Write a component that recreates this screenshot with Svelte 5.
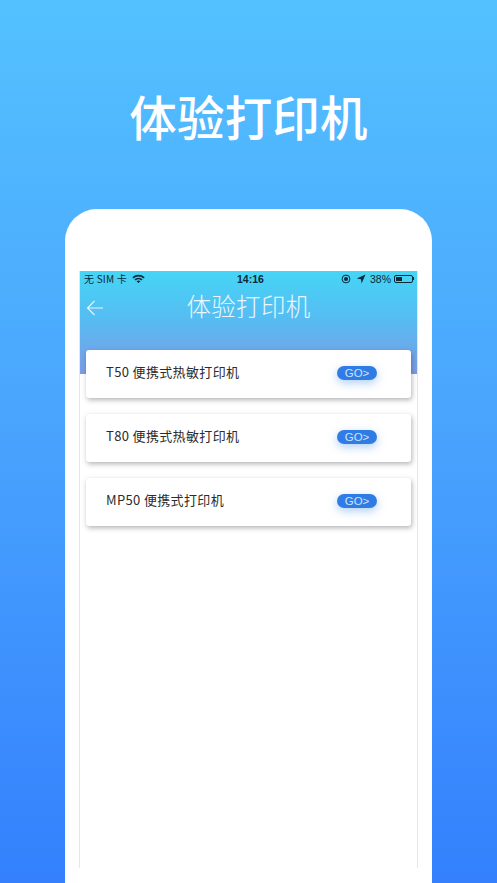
<script>
  const items = ['T50 便携式热敏打印机', 'T80 便携式热敏打印机', 'MP50 便携式打印机'];
</script>

<div class="page">
  <h1 class="headline">体验打印机</h1>
  <div class="phone">
    <div class="screen">
      <div class="hero">
        <div class="status">
          <div class="s-left">
            <span class="carrier">无 SIM 卡</span>
            <svg width="13" height="9" viewBox="0 0 13 9" class="wifi"><path d="M0.3 3.2A9 9 0 0 1 12.7 3.2L11.5 4.5A7.2 7.2 0 0 0 1.5 4.5Z M2.4 5.3A6 6 0 0 1 10.6 5.3L9.4 6.6A4.2 4.2 0 0 0 3.6 6.6Z M4.5 7.3A3 3 0 0 1 8.5 7.3L6.5 9Z" fill="#0c2a3a"/></svg>
          </div>
          <span class="time">14:16</span>
          <div class="s-right">
            <svg width="10" height="10" viewBox="0 0 10 10"><circle cx="5" cy="5" r="3.9" fill="none" stroke="#0c2a3a" stroke-width="1"/><circle cx="5" cy="5" r="2" fill="#0c2a3a"/></svg>
            <svg width="10" height="10" viewBox="0 0 10 10" class="loc"><path d="M9.5 0.5L0.8 4.6L5 5.2L5.6 9.4Z" fill="#0c2a3a"/></svg>
            <span class="pct">38%</span>
            <div class="battery"><div class="level"></div></div>
            <div class="nub"></div>
          </div>
        </div>
        <div class="nav">
          <svg class="back" width="18" height="16" viewBox="0 0 18 16"><path d="M17 8H1.5M8.5 1L1.5 8L8.5 15" fill="none" stroke="#e8f6fd" stroke-width="1.1"/></svg>
          <span class="nav-title">体验打印机</span>
        </div>
      </div>
      <div class="list">
        {#each items as item}
          <div class="card">
            <span class="label">{item}</span>
            <span class="go">GO&gt;</span>
          </div>
        {/each}
      </div>
    </div>
  </div>
</div>

<style>
  :global(body) {
    margin: 0;
  }
  .page {
    width: 497px;
    height: 883px;
    overflow: hidden;
    box-sizing: border-box;
    background: linear-gradient(180deg, #53c1ff 0%, #4aa6fd 45%, #3480fd 100%);
    display: flex;
    flex-direction: column;
    align-items: center;
    font-family: "Noto Sans CJK SC", "Liberation Sans", sans-serif;
  }
  .headline {
    margin: 81px 0 0;
    height: 128px;
    font-size: 47.5px;
    line-height: 70px;
    font-weight: 500;
    color: #fff;
    letter-spacing: 0.2px;
  }
  .phone {
    width: 367px;
    flex: 1;
    background: #fff;
    border-radius: 32px 32px 0 0;
    padding: 62px 15px 0;
    box-sizing: border-box;
  }
  .screen {
    height: 597px;
    margin: 0 -1px;
    border-left: 1px solid #e6e6ea;
    border-right: 1px solid #e6e6ea;
  }
  .hero {
    height: 103px;
    background: linear-gradient(180deg, #45d5f6 0%, #55bdf2 45%, #7c9be6 100%);
  }
  .status {
    height: 15px;
    display: flex;
    align-items: center;
    justify-content: space-between;
    padding: 0 3px 0 4px;
    font-size: 10px;
    color: #0c2a3a;
    position: relative;
  }
  .s-left, .s-right {
    display: flex;
    align-items: center;
    gap: 5px;
  }
  .carrier {
    letter-spacing: 0.2px;
    line-height: 15px;
  }
  .time {
    position: absolute;
    left: 157px;
    font-family: "Liberation Sans", sans-serif;
    font-weight: 700;
    font-size: 10.5px;
  }
  .s-right {
    gap: 0;
  }
  .loc {
    margin-left: 5px;
  }
  .pct {
    margin-left: 4px;
    margin-right: 3px;
    font-family: "Liberation Sans", sans-serif;
    font-size: 10.5px;
  }
  .battery {
    width: 19px;
    height: 8px;
    box-sizing: border-box;
    border: 1px solid #0c2a3a;
    border-radius: 2px;
    padding: 1px;
  }
  .level {
    width: 38%;
    height: 100%;
    background: #0c2a3a;
  }
  .nub {
    width: 1px;
    height: 3px;
    background: #0c2a3a;
  }
  .nav {
    height: 44px;
    display: flex;
    align-items: center;
    justify-content: center;
    position: relative;
  }
  .back {
    position: absolute;
    left: 6px;
    top: 14px;
  }
  .nav-title {
    font-size: 24.5px;
    line-height: 30px;
    font-weight: 300;
    color: #e9f7fd;
    letter-spacing: 0.3px;
    margin-bottom: 4px;
  }
  .list {
    margin: -24px 6px 0;
    display: flex;
    flex-direction: column;
    gap: 16px;
    position: relative;
  }
  .card {
    height: 48px;
    background: #fff;
    border-radius: 3px;
    box-shadow: 1px 2px 5px rgba(40, 40, 50, 0.35);
    display: flex;
    align-items: center;
    justify-content: space-between;
    padding: 0 34px 0 20px;
  }
  .label {
    font-size: 13px;
    line-height: 18px;
    color: #2c2c2c;
    letter-spacing: 0.35px;
    margin-bottom: 4px;
  }
  .go {
    width: 40px;
    height: 14px;
    margin-bottom: 2px;
    border-radius: 7px;
    background: #2f7de4;
    color: #cfe2f9;
    font-family: "Liberation Sans", sans-serif;
    font-size: 11.5px;
    line-height: 14px;
    text-align: center;
    box-shadow: 0 3px 10px rgba(47, 125, 228, 0.38);
  }
</style>
